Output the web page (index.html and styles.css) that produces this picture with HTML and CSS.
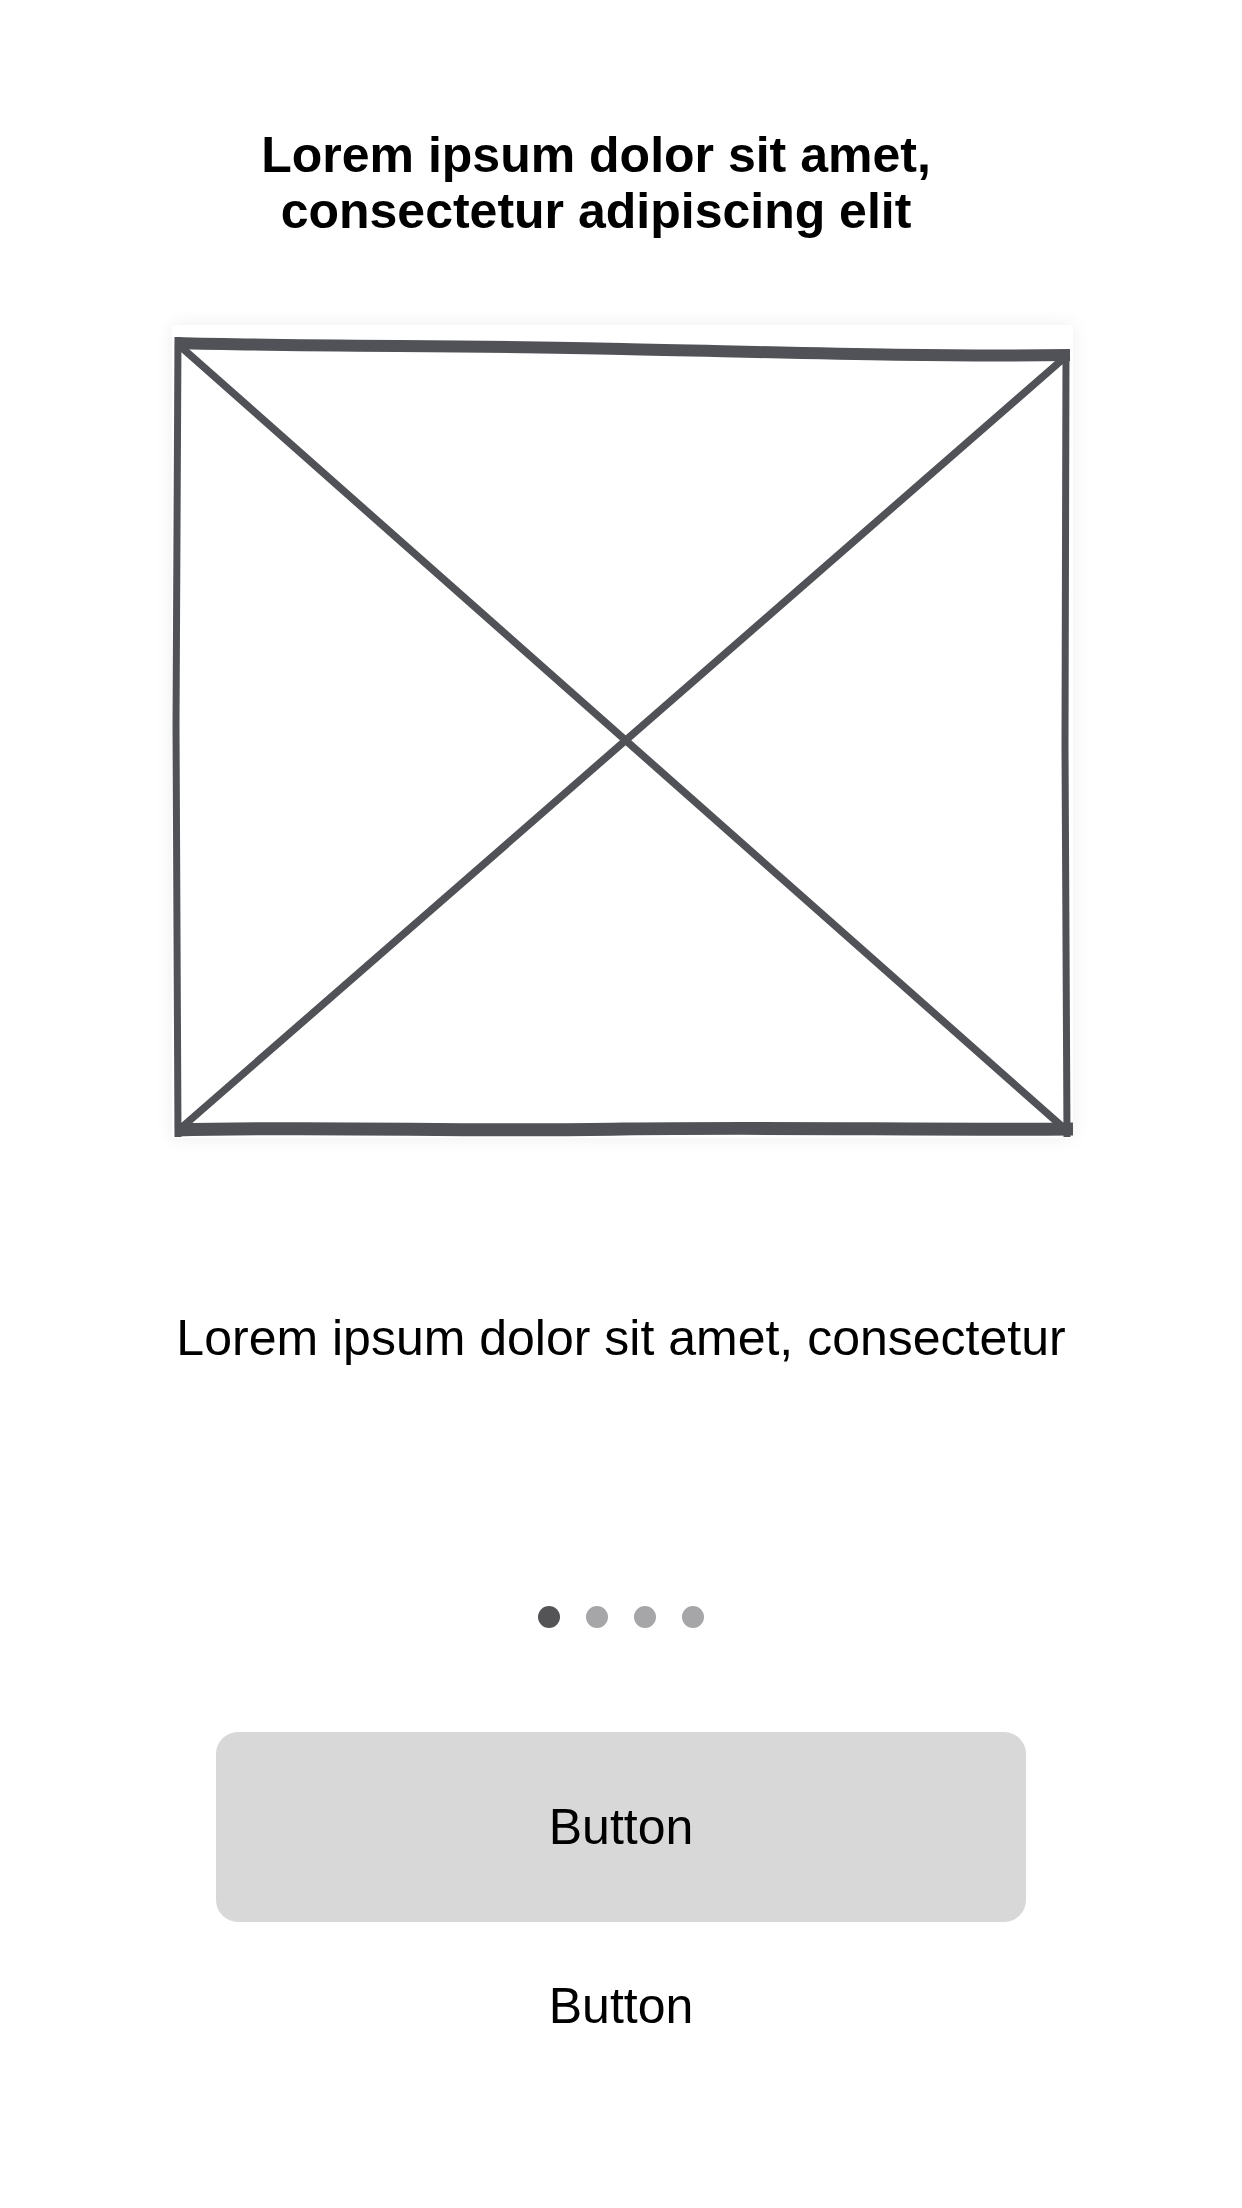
FILE: index.html
```html
<!DOCTYPE html>
<html lang="en">
<head>
<meta charset="utf-8">
<title>Onboarding</title>
<link rel="stylesheet" href="styles.css">
</head>
<body>
<main class="screen">
  <h1 class="title">Lorem ipsum dolor sit amet,<br>consectetur adipiscing elit</h1>
  <div class="placeholder">
    <svg class="placeholder-art" viewBox="0 0 901 813" width="901" height="813" aria-hidden="true">
      <g fill="none" stroke="#505257" stroke-linejoin="round">
        <path d="M3 18 C150 22 300 20 450 24 C600 27 750 32 898 30" stroke-width="12"/>
        <path d="M6 12 L4 400 L6 812" stroke-width="7"/>
        <path d="M894 26 L893 420 L895 812" stroke-width="7"/>
        <path d="M3 805 C150 801 300 807 450 804 C600 802 750 805 901 804" stroke-width="13"/>
        <path d="M9 22 L893 804" stroke-width="7.5" stroke-linecap="round"/>
        <path d="M9 803 L891 34" stroke-width="7.5" stroke-linecap="round"/>
      </g>
    </svg>
  </div>
  <p class="caption">Lorem ipsum dolor sit amet, consectetur</p>
  <div class="dots">
    <span class="dot dot-active"></span>
    <span class="dot"></span>
    <span class="dot"></span>
    <span class="dot"></span>
  </div>
  <button class="btn btn-primary" type="button">Button</button>
  <button class="btn btn-text" type="button">Button</button>
</main>
</body>
</html>
```

FILE: styles.css
```css
html, body {
  margin: 0;
  padding: 0;
  background: #ffffff;
}

.screen {
  width: 1242px;
  min-height: 2208px;
  display: flex;
  flex-direction: column;
  align-items: center;
  font-family: "Liberation Sans", Arial, sans-serif;
  color: #000;
}

.title {
  margin: 127px 50px 0 0;
  font-size: 50px;
  line-height: 56px;
  font-weight: 700;
  text-align: center;
}

.placeholder {
  margin-top: 86px;
  width: 901px;
  height: 813px;
  margin-left: 2px;
  background: #ffffff;
  box-shadow: 0 0 18px rgba(0, 0, 0, 0.07);
}

.placeholder-art {
  display: block;
  filter: blur(0.6px);
}

.caption {
  margin: 172px 0 0 0;
  font-size: 50px;
  line-height: 56px;
  font-weight: 400;
  text-align: center;
}

.dots {
  margin-top: 240px;
  display: flex;
  gap: 26px;
}

.dot {
  width: 22px;
  height: 22px;
  border-radius: 50%;
  background: #a6a6a8;
}

.dot-active {
  background: #545456;
}

.btn {
  font-family: "Liberation Sans", Arial, sans-serif;
  font-size: 50px;
  color: #000;
  border: none;
  padding: 0;
  cursor: pointer;
}

.btn-primary {
  margin-top: 104px;
  width: 810px;
  height: 190px;
  border-radius: 22px;
  background: #d8d8d8;
  line-height: 56px;
}

.btn-text {
  margin-top: 56px;
  background: transparent;
  line-height: 56px;
  height: 56px;
}
```
